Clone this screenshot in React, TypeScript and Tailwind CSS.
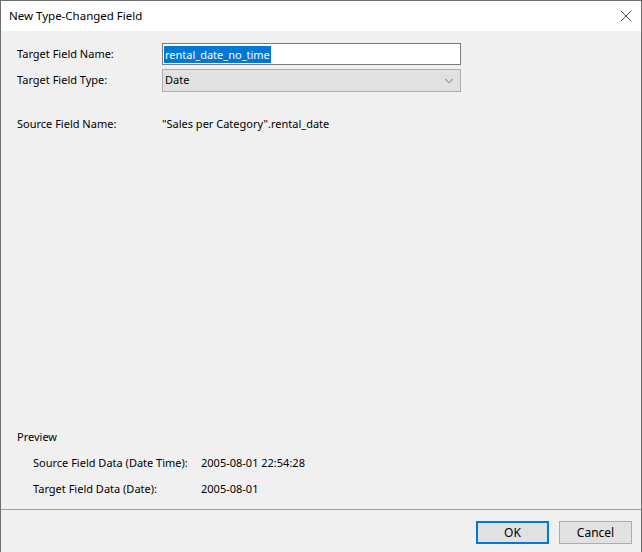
import { ChevronDown, X } from "lucide-react"

const font = { fontFamily: '"Noto Sans", "Liberation Sans", sans-serif' }

function Row({ label, children, labelW = "w-[145px]" }: { label: string; children: React.ReactNode; labelW?: string }) {
    return (
        <div className="flex items-center whitespace-nowrap">
            <span className={`${labelW} shrink-0`}>{label}</span>
            {children}
        </div>
    )
}

export default function App() {
    return (
        <div style={font} className="w-[642px] h-[552px] flex flex-col border border-b-0 border-[#6f6f6f] bg-[#f0f0f0] text-[11px] text-black overflow-hidden">
            {/* Title bar */}
            <div className="h-[30px] shrink-0 bg-white flex items-center pl-[8px] pr-[5px]">
                <span className="text-[11.5px]">New Type-Changed Field</span>
                <X className="ml-auto w-[20px] h-[20px] text-[#222]" strokeWidth={1} />
            </div>

            {/* Form */}
            <div className="flex-1 flex flex-col px-[16px] pt-[12px]">
                <Row label="Target Field Name:">
                    <div className="w-[299px] h-[22px] bg-white border border-[#7a7a7a] flex items-center px-[1px]">
                        <span className="bg-[#0078d7] text-white leading-[17px] px-[1px]">rental_date_no_time</span>
                    </div>
                </Row>
                <div className="mt-[4px]">
                    <Row label="Target Field Type:">
                        <div className="w-[299px] h-[23px] bg-[#e1e1e1] border border-[#adadad] flex items-center pl-[2px] pr-[4px]">
                            <span>Date</span>
                            <ChevronDown className="ml-auto w-[14px] h-[14px] text-[#444]" strokeWidth={1.2} />
                        </div>
                    </Row>
                </div>
                <div className="mt-[24px]">
                    <Row label="Source Field Name:">
                        <span>"Sales per Category".rental_date</span>
                    </Row>
                </div>

                {/* Preview */}
                <div className="mt-auto mb-[12px] flex flex-col">
                    <span className="leading-[16px]">Preview</span>
                    <div className="pl-[16px] flex flex-col gap-[9px] mt-[10px]">
                        <Row label="Source Field Data (Date Time):" labelW="w-[168px]">
                            <span>2005-08-01 22:54:28</span>
                        </Row>
                        <Row label="Target Field Data (Date):" labelW="w-[168px]">
                            <span>2005-08-01</span>
                        </Row>
                    </div>
                </div>
            </div>

            {/* Buttons */}
            <div className="h-[43px] shrink-0 border-t border-[#a0a0a0] flex items-start justify-end gap-[10px] pt-[11px] pr-[9px] text-[12px]">
                <button className="w-[73px] h-[23px] bg-[#e1e1e1] border-2 border-[#0078d7]">OK</button>
                <button className="w-[73px] h-[23px] bg-[#e1e1e1] border border-[#adadad]">Cancel</button>
            </div>
        </div>
    )
}
